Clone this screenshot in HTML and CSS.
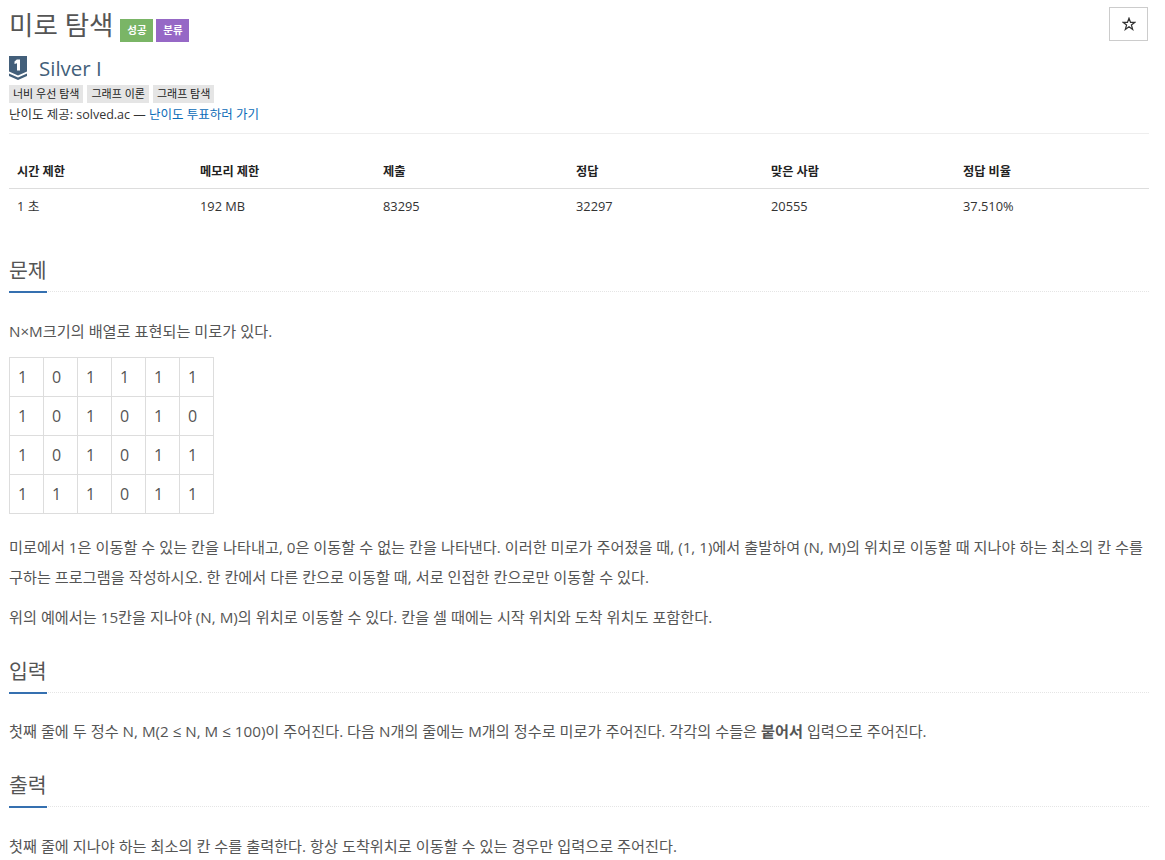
FILE: index.html
```html
<!DOCTYPE html>
<html lang="ko">
<head>
<meta charset="utf-8">
<title>미로 탐색</title>
<link rel="stylesheet" href="styles.css">
</head>
<body>
<main class="page">
  <header class="title-row">
    <h1 class="title">미로 탐색</h1>
    <span class="label label-green">성공</span>
    <span class="label label-purple">분류</span>
    <button class="star-btn" type="button" aria-label="즐겨찾기">
      <svg class="star-icon" viewBox="0 0 14 14" aria-hidden="true"><path d="M7 1.200L8.500 5.300H12.900L9.400 8 10.700 12.500 7 9.800 3.300 12.500 4.600 8 1.100 5.300H5.500Z"/></svg>
    </button>
  </header>
  <div class="tier">
    <svg class="tier-icon" viewBox="0 0 18 24" aria-hidden="true">
      <path class="tier-shape" d="M0 0H18V15.500L9 19.500 0 15.500Z"/>
      <path class="tier-shape" d="M0 17.500L9 21.500 18 17.500V20L9 24 0 20Z"/>
      <path class="tier-num" d="M7.800 3.500H11V14.500H8V7.200L5.500 8V5.500Z"/>
    </svg>
    <span class="tier-name">Silver I</span>
  </div>
  <div class="tags">
    <span class="tag">너비 우선 탐색</span>
    <span class="tag">그래프 이론</span>
    <span class="tag">그래프 탐색</span>
  </div>
  <p class="credit">난이도 제공: solved.ac — <a class="link" href="#">난이도 투표하러 가기</a></p>
  <hr class="rule">
  <table class="info">
    <thead>
      <tr><th>시간 제한</th><th>메모리 제한</th><th>제출</th><th>정답</th><th>맞은 사람</th><th>정답 비율</th></tr>
    </thead>
    <tbody>
      <tr><td>1 초</td><td>192 MB</td><td>83295</td><td>32297</td><td>20555</td><td>37.510%</td></tr>
    </tbody>
  </table>

  <section class="section first">
    <div class="headline"><h2>문제</h2></div>
    <p class="text">N×M크기의 배열로 표현되는 미로가 있다.</p>
    <table class="maze">
      <tbody>
        <tr><td>1</td><td>0</td><td>1</td><td>1</td><td>1</td><td>1</td></tr>
        <tr><td>1</td><td>0</td><td>1</td><td>0</td><td>1</td><td>0</td></tr>
        <tr><td>1</td><td>0</td><td>1</td><td>0</td><td>1</td><td>1</td></tr>
        <tr><td>1</td><td>1</td><td>1</td><td>0</td><td>1</td><td>1</td></tr>
      </tbody>
    </table>
    <p class="text">미로에서 1은 이동할 수 있는 칸을 나타내고, 0은 이동할 수 없는 칸을 나타낸다. 이러한 미로가 주어졌을 때, (1, 1)에서 출발하여 (N, M)의 위치로 이동할 때 지나야 하는 최소의 칸 수를 구하는 프로그램을 작성하시오. 한 칸에서 다른 칸으로 이동할 때, 서로 인접한 칸으로만 이동할 수 있다.</p>
    <p class="text">위의 예에서는 15칸을 지나야 (N, M)의 위치로 이동할 수 있다. 칸을 셀 때에는 시작 위치와 도착 위치도 포함한다.</p>
  </section>
  <section class="section">
    <div class="headline"><h2>입력</h2></div>
    <p class="text">첫째 줄에 두 정수 N, M(2 ≤ N, M ≤ 100)이 주어진다. 다음 N개의 줄에는 M개의 정수로 미로가 주어진다. 각각의 수들은 <strong>붙어서</strong> 입력으로 주어진다.</p>
  </section>
  <section class="section">
    <div class="headline"><h2>출력</h2></div>
    <p class="text">첫째 줄에 지나야 하는 최소의 칸 수를 출력한다. 항상 도착위치로 이동할 수 있는 경우만 입력으로 주어진다.</p>
  </section>
</main>
</body>
</html>
```
FILE: styles.css
```css
* { box-sizing: border-box; }
html, body { margin: 0; padding: 0; background: #fff; }
body {
  font-family: "Open Sans", "Noto Sans CJK KR", sans-serif;
  font-size: 14px;
  line-height: 20px;
  color: #333;
  overflow: hidden;
}
.page { padding: 0 16px 0 9px; }

.title-row { display: flex; align-items: flex-start; height: 48px; padding-top: 6px; }
.title { margin: 0 7px 0 0; font-size: 26.500px; line-height: 38px; font-weight: 400; color: #555; }
.label {
  margin: 13px 3px 0 0;
  width: 33px; height: 23px;
  font-size: 10.500px; line-height: 23px; font-weight: 700;
  text-align: center; color: #fff;
}
.label-green { background: #7ab566; }
.label-purple { background: #9668c6; }
.star-btn {
  display: flex; align-items: center; justify-content: center;
  margin: 1px 1px 0 auto; width: 39px; height: 34px; padding: 0;
  border: 1px solid #ccc; background: #fff;
}
.star-icon { width: 14px; height: 14px; fill: none; stroke: #333; stroke-width: 1.200; }

.tier { display: flex; align-items: center; gap: 12px; height: 37px; padding-top: 2px; }
.tier-icon { width: 18px; height: 24px; flex: none; }
.tier-shape { fill: #435f7a; }
.tier-num { fill: #fff; }
.tier-name { font-size: 20.500px; color: #435f7a; }

.tags { display: flex; gap: 4px; height: 18px; }
.tag { background: #e5e5e5; padding: 0 4px; font-size: 11px; line-height: 18px; color: #222; }
.credit { margin: 2px 0 0; font-size: 12.500px; line-height: 20px; color: #333; }
.link { color: #0b6cb8; text-decoration: none; }
.rule { margin: 8px 0 0; border: 0; border-top: 1px solid #eee; }

.info { width: 100%; margin-top: 20px; border-collapse: collapse; table-layout: fixed; font-size: 12.800px; }
.info th, .info td { padding: 0 8px; text-align: left; }
.info th { height: 34px; padding-top: 2px; font-size: 12.200px; font-weight: 700; color: #222; border-bottom: 1px solid #ddd; }
.info td { height: 35px; color: #333; }
.info th:nth-child(1) { width: 183px; }
.info th:nth-child(2) { width: 183px; }
.info th:nth-child(3) { width: 193px; }
.info th:nth-child(4) { width: 195px; }
.info th:nth-child(5) { width: 192px; }

.section { margin-top: 24px; }
.section.first { margin-top: 32px; }
.headline { border-bottom: 1px dotted #e5e5e5; height: 37px; }
.headline h2 {
  display: inline-block; margin: 0; height: 38px;
  font-size: 20.500px; line-height: 30px; font-weight: 400; color: #555;
  border-bottom: 2px solid #3570b0;
}
.text { margin: 0 0 10px; font-size: 15.200px; line-height: 30px; color: #555; }
.section .headline + .text { margin-top: 23.500px; }
.section .text:last-child { margin-bottom: 0; }
.maze { border-collapse: collapse; margin: 11px 0 18px; font-size: 16px; color: #555; }
.maze td { width: 34px; height: 39px; border: 1px solid #ddd; padding: 0 8px; }
.text strong { font-weight: 700; }
```
